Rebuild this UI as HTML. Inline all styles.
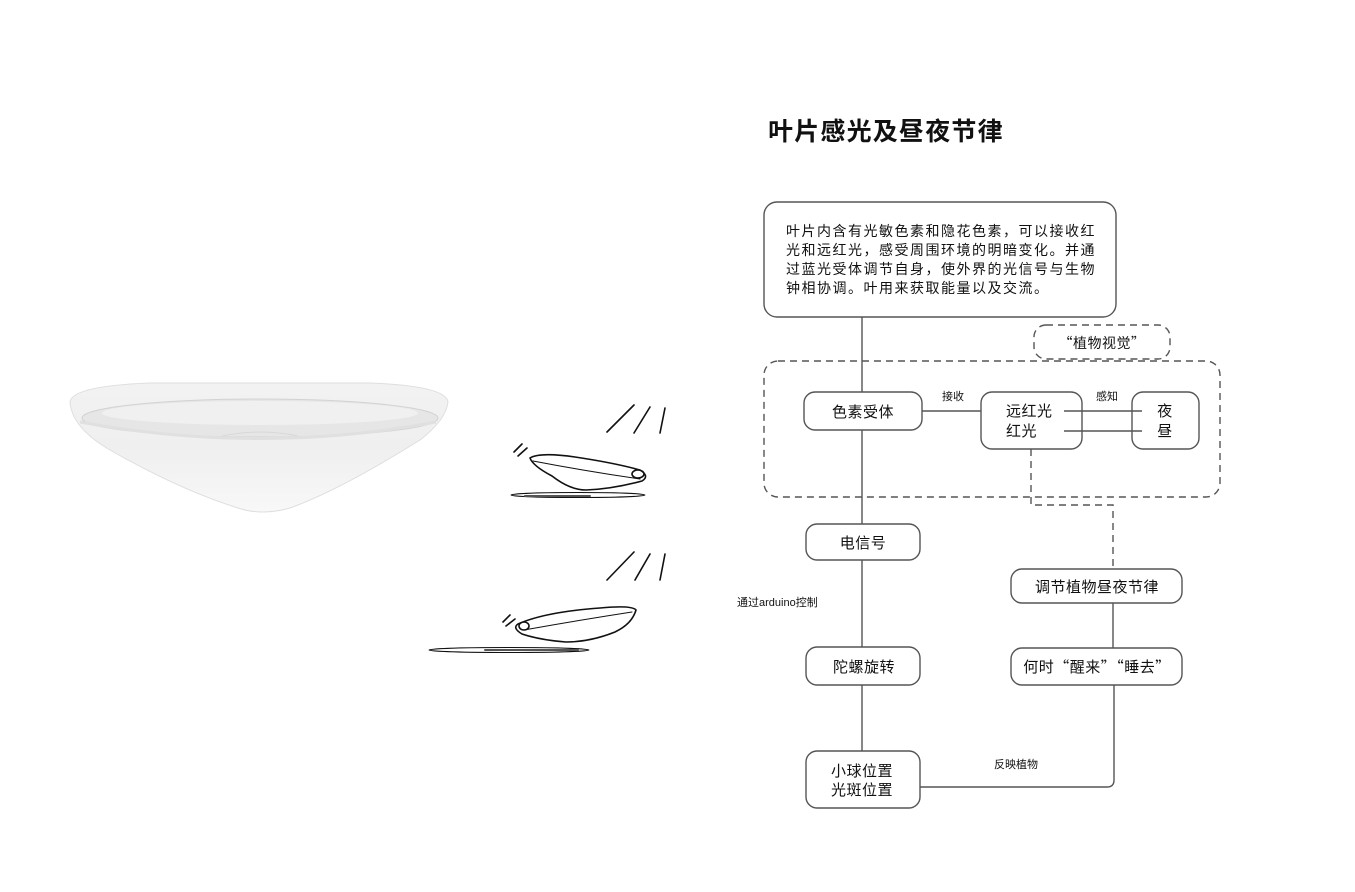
<!DOCTYPE html>
<html><head><meta charset="utf-8"><style>
html,body{margin:0;padding:0;background:#fff;}
svg{display:block;font-family:"Liberation Sans","Noto Sans CJK SC",sans-serif;}
</style></head><body>
<svg width="1355" height="892" viewBox="0 0 1355 892" xmlns="http://www.w3.org/2000/svg">
<defs>
<linearGradient id="bowl" x1="0" y1="0" x2="0" y2="1">
<stop offset="0" stop-color="#f2f2f2"/><stop offset="0.5" stop-color="#efefef"/><stop offset="1" stop-color="#f8f8f8"/>
</linearGradient>
</defs>
<path d="M70 402 Q72 386 150 383 L370 383 Q446 386 448 402 Q446 420 420 440 Q340 490 290 508 Q262 516 238 508 Q180 490 110 450 Q72 428 70 402 Z" fill="url(#bowl)" stroke="#dedede" stroke-width="1"/>
<ellipse cx="260" cy="418" rx="178" ry="19" fill="#e6e6e6" stroke="#d2d2d2"/>
<ellipse cx="260" cy="413" rx="158" ry="12" fill="#f0f0f0"/>
<path d="M222 436 Q260 428 298 436" fill="none" stroke="#d8d8d8"/>
<path d="M80 422 Q260 455 436 422" fill="none" stroke="#e0e0e0" stroke-width="3"/>
<g fill="none" stroke="#111" stroke-width="1.6" stroke-linecap="round">
<path d="M607 432 L634 405 M634 433 L650 407 M660 433 L665 408"/>
<path d="M514 452 L522 444 M518 456 L527 448"/>
<path d="M530 458 Q540 452 575 457 Q615 463 640 470 Q650 476 642 481 Q612 489 586 490 Q570 490 552 476 Q533 466 530 458 Z"/>
<path d="M533 461 Q585 471 640 479" stroke-width="1"/>
<ellipse cx="638" cy="474" rx="6" ry="4"/>
<ellipse cx="578" cy="495" rx="67" ry="2.5" stroke-width="1"/>
<path d="M525 496 L590 496" stroke="#555" stroke-width="2"/>
<path d="M607 580 L634 552 M635 580 L650 554 M660 580 L665 554"/>
<path d="M503 622 L510 615 M506 626 L515 619"/>
<path d="M518 624 Q545 612 600 608 Q632 605 636 610 Q632 624 615 632 Q590 642 566 642 Q540 640 522 634 Q512 628 518 624 Z"/>
<path d="M524 630 Q580 620 632 612" stroke-width="1"/>
<ellipse cx="524" cy="626" rx="5" ry="4"/>
<ellipse cx="509" cy="650" rx="80" ry="2.5" stroke-width="1"/>
<path d="M485 650 L578 650" stroke="#555" stroke-width="2"/>
</g>
<text x="768" y="140" font-size="25" font-weight="bold" fill="#111" letter-spacing="1.2">叶片感光及昼夜节律</text>
<g fill="none" stroke="#555" stroke-width="1.4">
<line x1="862" y1="317" x2="862" y2="751"/>
<line x1="922" y1="411" x2="981" y2="411"/>
<line x1="1113" y1="603" x2="1113" y2="648"/>
<path d="M920 787 L1107 787 Q1114 787 1114 780 L1114 685"/>
<g stroke-dasharray="7,5">
<rect x="1034" y="325" width="136" height="34" rx="12"/>
<rect x="764" y="361" width="456" height="136" rx="14"/>
<path d="M1031 449 L1031 505 L1113 505 L1113 569"/>
</g>
<g fill="#fff">
<rect x="764" y="202" width="352" height="115" rx="13"/>
<rect x="804" y="392" width="118" height="38" rx="11"/>
<rect x="981" y="392" width="101" height="57" rx="11"/>
<rect x="1132" y="392" width="67" height="57" rx="11"/>
<rect x="806" y="524" width="114" height="36" rx="11"/>
<rect x="1011" y="569" width="171" height="34" rx="11"/>
<rect x="806" y="647" width="114" height="38" rx="11"/>
<rect x="1011" y="648" width="171" height="37" rx="11"/>
<rect x="806" y="751" width="114" height="57" rx="11"/>
</g>
<line x1="1064" y1="411" x2="1142" y2="411"/>
<line x1="1064" y1="431" x2="1142" y2="431"/>
</g>
<g fill="#111" font-size="14" letter-spacing="1.5">
<text x="786" y="236">叶片内含有光敏色素和隐花色素，可以接收红</text>
<text x="786" y="255">光和远红光，感受周围环境的明暗变化。并通</text>
<text x="786" y="274">过蓝光受体调节自身，使外界的光信号与生物</text>
<text x="786" y="293">钟相协调。叶用来获取能量以及交流。</text>
</g>
<g fill="#111" font-size="15" letter-spacing="0.5">
<text x="1102" y="348" text-anchor="middle" font-family="Noto Sans CJK SC, sans-serif" font-size="14">“植物视觉”</text>
<text x="863" y="417" text-anchor="middle">色素受体</text>
<text x="1006" y="416">远红光</text>
<text x="1006" y="436">红光</text>
<text x="1165" y="416" text-anchor="middle">夜</text>
<text x="1165" y="436" text-anchor="middle">昼</text>
<text x="863" y="548" text-anchor="middle">电信号</text>
<text x="1097" y="592" text-anchor="middle">调节植物昼夜节律</text>
<text x="864" y="672" text-anchor="middle">陀螺旋转</text>
<text x="1097" y="672" text-anchor="middle" font-family="Noto Sans CJK SC, sans-serif">何时“醒来”“睡去”</text>
<text x="862" y="776" text-anchor="middle">小球位置</text>
<text x="862" y="795" text-anchor="middle">光斑位置</text>
</g>
<g fill="#111" font-size="11">
<text x="942" y="400">接收</text>
<text x="1096" y="400">感知</text>
<text x="737" y="606">通过arduino控制</text>
<text x="994" y="768">反映植物</text>
</g>
</svg>
</body></html>
